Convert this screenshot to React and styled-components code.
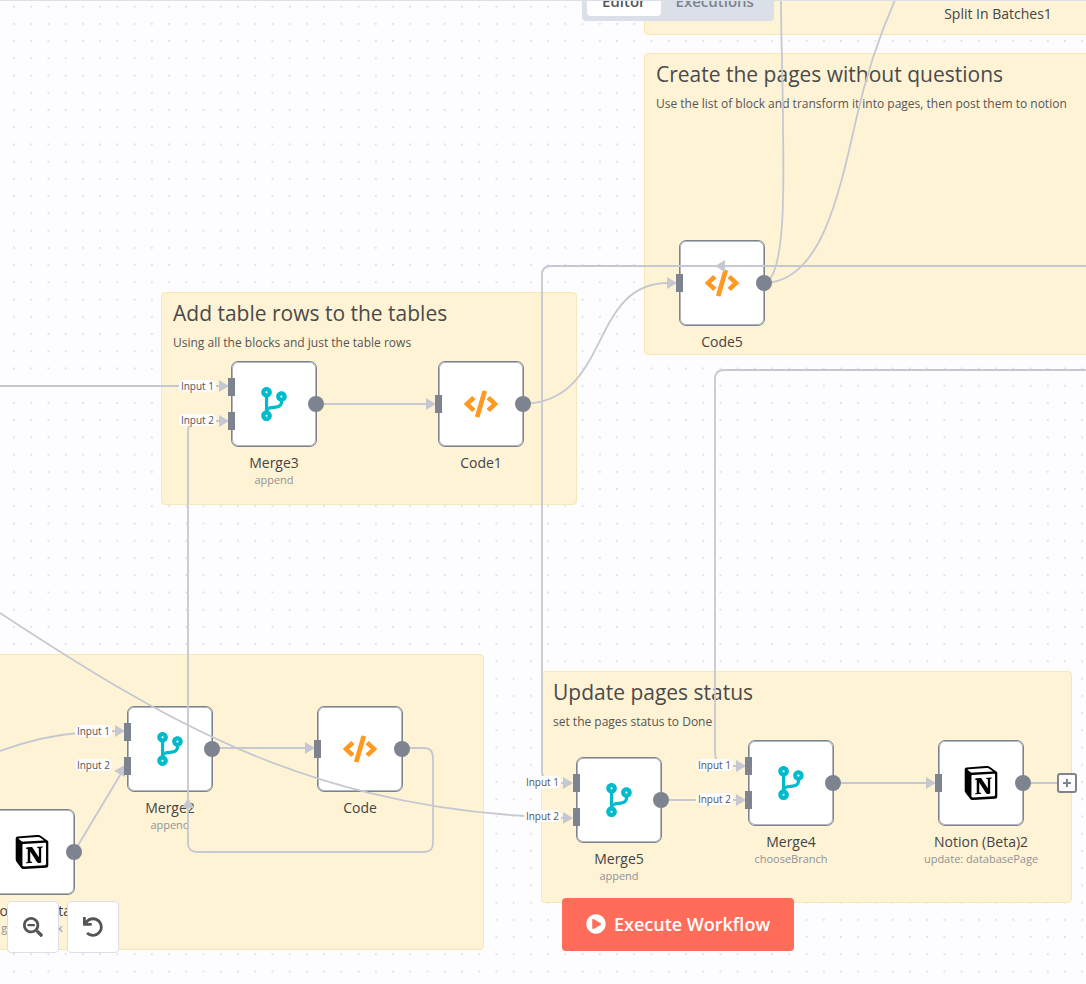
import React from "react";
import styled, { createGlobalStyle } from "styled-components";
import { FaCodeBranch, FaCode, FaSearchMinus, FaUndo, FaPlayCircle } from "react-icons/fa";
import { SiNotion } from "react-icons/si";

const GlobalStyle = createGlobalStyle`
  * { box-sizing: border-box; }
  body {
    margin: 0;
    font-family: "Open Sans", sans-serif;
    color: #555555;
    background: #fdfdff;
  }
`;

const WIRE = "#c6c8d1";
const PORT = "#7d838f";

const Canvas = styled.main`
  position: relative;
  min-height: 100vh;
  overflow: hidden;
  border-top: 1px solid #dbdfe7;
`;

const Layer = styled.svg`
  position: absolute;
  top: -1px;
  left: 0;
  width: 100%;
  height: calc(100% + 1px);
  z-index: ${(p) => p.$level};
  pointer-events: none;
`;

const Note = styled.section`
  position: absolute;
  left: ${(p) => p.$x}px;
  top: ${(p) => p.$y - 1}px;
  width: ${(p) => p.$w}px;
  height: ${(p) => p.$h}px;
  padding: 6px 11px;
  background: #fff3d6;
  border: 1px solid #f6e6b8;
  border-radius: 4px;
  white-space: nowrap;
`;

const NoteTitle = styled.h2`
  margin: 0;
  font-size: 21px;
  font-weight: 500;
  line-height: 28px;
  color: #4a4a4a;
`;

const NoteText = styled.p`
  margin: 7px 0 0;
  font-size: 12px;
  line-height: 18px;
`;

const NodeFrame = styled.article`
  position: absolute;
  left: ${(p) => p.$x}px;
  top: ${(p) => p.$y - 1}px;
  width: 86px;
  display: flex;
  flex-direction: column;
  align-items: center;
  white-space: nowrap;
`;

const NodeBox = styled.div`
  position: relative;
  width: 86px;
  height: 86px;
  display: flex;
  align-items: center;
  justify-content: center;
  background: #ffffff;
  border: 1px solid ${PORT};
  box-shadow: inset 0 0 0 1px rgba(125, 131, 143, 0.6);
  border-radius: 7px;
  color: ${(p) => p.$color};
`;

const NodeName = styled.h3`
  margin: 7px 0 0;
  font-size: 14px;
  font-weight: 500;
  line-height: 18px;
  color: #444444;
`;

const NodeDetail = styled.p`
  margin: 0;
  font-size: 11px;
  line-height: 15px;
  color: #909298;
`;

const InputPort = styled.span`
  position: absolute;
  z-index: 3;
  left: -4px;
  top: ${(p) => p.$y - 10}px;
  width: 7px;
  height: 18px;
  background: ${PORT};
`;

const OutputPort = styled.span`
  position: absolute;
  z-index: 3;
  right: -8px;
  top: 34px;
  width: 16px;
  height: 16px;
  border-radius: 50%;
  background: ${PORT};
`;

const PortLabel = styled.span`
  position: absolute;
  z-index: 3;
  right: 100px;
  top: ${(p) => p.$y - 8}px;
  padding: 0 2px;
  font-size: 10px;
  line-height: 12px;
  color: #555555;
  background: #fdfdff;
  border-radius: 5px;
`;

const AddButton = styled.button`
  position: absolute;
  z-index: 3;
  left: 1057px;
  top: 772px;
  width: 20px;
  height: 20px;
  padding: 0;
  display: flex;
  align-items: center;
  justify-content: center;
  background: #fdfdff;
  border: 2px solid ${PORT};
  border-radius: 3px;
`;

const TopDock = styled.header`
  position: absolute;
  z-index: 5;
  top: -16px;
  left: 270px;
  right: 0;
  display: flex;
  justify-content: center;
`;

const Tabs = styled.nav`
  display: flex;
  padding: 5px;
  background: #dbdfe7;
  border-radius: 4px;
`;

const Tab = styled.button`
  border: 0;
  height: 26px;
  padding: 0 15px 4px;
  font: 600 15px/20px "Open Sans", sans-serif;
  color: ${(p) => (p.$active ? "#555555" : "#7d8391")};
  background: ${(p) => (p.$active ? "#ffffff" : "transparent")};
  border-radius: 4px;
`;

const BottomDock = styled.footer`
  position: absolute;
  z-index: 5;
  bottom: 33px;
  left: 270px;
  right: 0;
  display: flex;
  justify-content: center;
`;

const ExecuteButton = styled.button`
  display: flex;
  align-items: center;
  gap: 8px;
  height: 53px;
  padding: 0 24px 1px;
  border: 0;
  border-radius: 4px;
  background: #ff6d5a;
  color: #ffffff;
  font: 600 18px/24px "Open Sans", sans-serif;
`;

const ZoomDock = styled.div`
  position: absolute;
  z-index: 5;
  left: 7px;
  bottom: 31px;
  display: flex;
  gap: 8px;
`;

const ZoomButton = styled.button`
  width: 52px;
  height: 52px;
  padding: 0;
  display: flex;
  align-items: center;
  justify-content: center;
  background: #ffffff;
  border: 1px solid #dbdfe7;
  border-radius: 4px;
  color: #555555;
`;

const KINDS = {
  merge: { color: "#00bbcc", icon: <FaCodeBranch size={34} />, inputs: [26, 60] },
  code: { color: "#ff9922", icon: <FaCode size={34} />, inputs: [43] },
  notion: { color: "#000000", icon: <SiNotion size={34} />, inputs: [43] },
};

const NODES = [
  { kind: "merge", name: "Merge3", detail: "append", x: 231, y: 361 },
  { kind: "code", name: "Code1", x: 438, y: 361 },
  { kind: "code", name: "Code5", x: 679, y: 240 },
  { kind: "merge", name: "Merge2", detail: "append", x: 127, y: 706 },
  { kind: "code", name: "Code", x: 317, y: 706 },
  { kind: "notion", name: "Notion (Beta)", detail: "getAll: block", x: -11, y: 809 },
  { kind: "merge", name: "Merge5", detail: "append", x: 576, y: 757 },
  { kind: "merge", name: "Merge4", detail: "chooseBranch", x: 748, y: 740 },
  { kind: "notion", name: "Notion (Beta)2", detail: "update: databasePage", x: 938, y: 740 },
  { kind: "code", name: "Split In Batches1", x: 955, y: -88 },
];

const NOTES = [
  { x: 644, y: -200, w: 600, h: 235 },
  {
    x: 644, y: 53, w: 600, h: 302,
    title: "Create the pages without questions",
    text: "Use the list of block and transform it into pages, then post them to notion",
  },
  {
    x: 161, y: 292, w: 416, h: 213,
    title: "Add table rows to the tables",
    text: "Using all the blocks and just the table rows",
  },
  { x: -120, y: 654, w: 604, h: 296 },
  {
    x: 541, y: 671, w: 531, h: 232,
    title: "Update pages status",
    text: "set the pages status to Done",
  },
];

const WIRES = [
  "M0 386 H220",
  "M316 404 H428",
  "M523 404 C612 402 588 283 668 283",
  "M765 283 C785 275 784 190 783 130 C783 80 781 40 781 0",
  "M765 283 C820 281 838 200 856 120 C866 75 880 34 895 0",
  "M2000 266 H551 Q542 266 542 275 V770 Q542 783 555 783 H566",
  "M2000 370 H724 Q715 370 715 379 V752 Q715 766 728 766 H738",
  "M403 748 H424 Q433 748 433 758 V843 Q433 852 424 852 H197 Q188 852 188 843 V432 Q188 421 199 421 H220",
  "M0 613 C160 718 300 802 524 816 L566 818",
  "M0 751 C30 740 54 735 78 733 L116 731",
  "M74 852 L122 772",
  "M213 748 H307",
  "M661 800 H738",
  "M834 783 H928",
  "M1024 783 H1057",
];

const ARROWS = [
  [229, 386], [229, 421], [436, 404], [677, 283], [125, 731], [315, 748],
  [573, 783], [573, 818], [746, 766], [746, 800], [936, 783],
];

function WorkflowNode({ node }) {
  const kind = KINDS[node.kind];
  return (
    <NodeFrame $x={node.x} $y={node.y}>
      <NodeBox $color={kind.color}>
        {kind.icon}
        {kind.inputs.map((y, i) => (
          <React.Fragment key={y}>
            <InputPort $y={y} />
            {kind.inputs.length > 1 && <PortLabel $y={y}>Input {i + 1}</PortLabel>}
          </React.Fragment>
        ))}
        <OutputPort />
      </NodeBox>
      <NodeName>{node.name}</NodeName>
      {node.detail && <NodeDetail>{node.detail}</NodeDetail>}
    </NodeFrame>
  );
}

export default function App() {
  return (
    <>
      <GlobalStyle />
      <Canvas>
        <Layer $level={0} aria-hidden="true">
          <defs>
            <pattern id="grid" x="5.4" y="-2" width="17.23" height="17.23" patternUnits="userSpaceOnUse">
              <circle cx="8.6" cy="8.6" r="1" fill="#d9dae0" />
            </pattern>
          </defs>
          <rect width="100%" height="100%" fill="url(#grid)" />
        </Layer>
        {NOTES.map((note, i) => (
          <Note key={i} $x={note.x} $y={note.y} $w={note.w} $h={note.h}>
            {note.title && <NoteTitle>{note.title}</NoteTitle>}
            {note.text && <NoteText>{note.text}</NoteText>}
          </Note>
        ))}
        {NODES.map((node) => (
          <WorkflowNode key={node.name} node={node} />
        ))}
        <Layer $level={2} aria-hidden="true">
          <g fill="none" stroke={WIRE} strokeWidth="1.8">
            {WIRES.map((d) => (
              <path key={d} d={d} />
            ))}
          </g>
          <g fill={WIRE}>
            {ARROWS.map(([x, y]) => (
              <path key={`${x}-${y}`} d={`M${x} ${y} l-10 -6 v12 z`} />
            ))}
            <path d="M715 266 l10 -6 v12 z" />
            <path d="M188 798 l-6 10 h12 z" />
            <path d="M125 765 L114 771 L125 777 z" />
          </g>
        </Layer>
        <AddButton aria-label="Add node">
          <svg width="10" height="10" viewBox="0 0 10 10" aria-hidden="true">
            <path d="M5 1 V9 M1 5 H9" stroke={PORT} strokeWidth="2" />
          </svg>
        </AddButton>
        <TopDock>
          <Tabs>
            <Tab $active>Editor</Tab>
            <Tab>Executions</Tab>
          </Tabs>
        </TopDock>
        <ZoomDock>
          <ZoomButton aria-label="Zoom out">
            <FaSearchMinus size={20} />
          </ZoomButton>
          <ZoomButton aria-label="Reset zoom">
            <FaUndo size={20} />
          </ZoomButton>
        </ZoomDock>
        <BottomDock>
          <ExecuteButton>
            <FaPlayCircle size={20} />
            Execute Workflow
          </ExecuteButton>
        </BottomDock>
      </Canvas>
    </>
  );
}
